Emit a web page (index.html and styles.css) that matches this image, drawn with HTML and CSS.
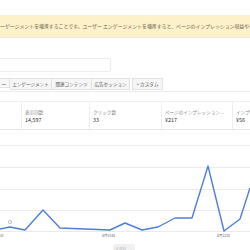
FILE: index.html
```html
<!DOCTYPE html>
<html lang="ja">
<head>
    <meta charset="UTF-8">
    <title>AdSense レポート</title>
    <link rel="stylesheet" href="styles.css">
</head>
<body>
    <div class="banner">ーゲージメントを増進することです。ユーザー エンゲージメントを増進すると、ページのインプレッション収益や平均</div>

    <div class="search"></div>

    <div class="tabs">
        <span class="tab first">ー</span>
        <span class="tab wide">エンゲージメント</span>
        <span class="tab mid">関連コンテンツ</span>
        <span class="tab mid2">広告セッション</span>
        <span class="tab custom">+ カスタム</span>
    </div>

    <div class="metrics">
        <div class="metric blank"></div>
        <div class="metric">
            <div class="label">表示回数</div>
            <div class="value">14,597</div>
        </div>
        <div class="metric">
            <div class="label">クリック数</div>
            <div class="value">33</div>
        </div>
        <div class="metric">
            <div class="label">ページのインプレッション...</div>
            <div class="value">¥217</div>
        </div>
        <div class="metric">
            <div class="label">インプ</div>
            <div class="value">¥56</div>
        </div>
    </div>

    <div class="chart">
        <svg width="250" height="123" viewBox="0 127 250 123">
            <g class="grid">
                <line x1="0" y1="142.5" x2="250" y2="142.5"/>
                <line x1="0" y1="164.5" x2="250" y2="164.5"/>
                <line x1="0" y1="186.5" x2="250" y2="186.5"/>
                <line x1="0" y1="207.5" x2="250" y2="207.5"/>
                <line x1="0" y1="228.5" x2="250" y2="228.5"/>
            </g>
            <polyline class="series" points="0,226 10,224 25,227 43,207 60,225 110,227 125,220 142,227 158,224 175,215 192,215 208,163 224,228 240,216 250,185"/>
            <circle class="note" cx="10" cy="219" r="1.6"/>
            <text class="axis" x="0" y="234">日</text>
            <text class="axis" x="102" y="234">8月15日</text>
            <text class="axis" x="217" y="234">8月22日</text>
            <rect class="credit" x="113" y="241" width="22" height="9" rx="2"/>
            <text class="credit-text" x="116" y="247">© 2018</text>
        </svg>
    </div>
</body>
</html>
```

FILE: styles.css
```css
body {
    margin: 0;
    width: 250px;
    height: 250px;
    overflow: hidden;
    background: #fff;
    font-family: "Noto Sans CJK JP", "Noto Sans", sans-serif;
    color: #333;
}
.banner {
    margin-top: 15px;
    height: 22px;
    line-height: 22px;
    background: #fcf1c9;
    box-shadow: 0 1px 1px rgba(0,0,0,0.08);
    color: #6d6450;
    font-size: 4.9px;
    white-space: nowrap;
    overflow: hidden;
}
.search {
    margin-top: 21px;
    margin-left: -1px;
    width: 110px;
    height: 12px;
    border: 1px solid #ececec;
    border-radius: 1px;
}
.tabs {
    display: flex;
    margin-top: 6px;
    padding-bottom: 1px;
    border-bottom: 1px solid #ececec;
    font-size: 4.6px;
    color: #555;
}
.tab {
    flex: none;
    height: 10px;
    line-height: 10px;
    background: #f6f6f6;
    border: 1px solid #e2e2e2;
    border-left: none;
    text-align: center;
    white-space: nowrap;
    overflow: hidden;
}
.tab.first {
    width: 10px;
    text-align: right;
    padding-right: 3px;
    box-sizing: border-box;
}
.tab.wide {
    width: 41px;
}
.tab.mid {
    width: 39px;
}
.tab.mid2 {
    width: 37px;
}
.custom {
    width: 29px;
    margin-left: 2px;
    border-left: 1px solid #e2e2e2;
}
.metrics {
    display: grid;
    grid-template-columns: 21px 68px 72px 71px 1fr;
    margin-top: 9px;
    height: 27px;
    border-top: 1px solid #f0f0f0;
    border-bottom: 1px solid #e4e4e4;
}
.metric {
    padding: 7px 0 0 3px;
    border-left: 1px solid #eeeeee;
    white-space: nowrap;
    overflow: hidden;
}
.metric.blank {
    border-left: none;
}
.label {
    font-size: 4.6px;
    line-height: 6px;
    color: #888;
}
.value {
    margin-top: 2px;
    font-size: 5.4px;
    line-height: 7px;
    color: #333;
}
.chart {
    height: 123px;
}
.chart svg {
    display: block;
}
.grid line {
    stroke: #ebebeb;
    stroke-width: 1;
}
.series {
    fill: none;
    stroke: #4d7fd6;
    stroke-width: 1.4;
    stroke-linejoin: round;
}
.note {
    fill: #fff;
    stroke: #999;
    stroke-width: 0.6;
}
.axis {
    font-size: 3.6px;
    fill: #666;
}
.credit {
    fill: #f0f0f0;
}
.credit-text {
    font-size: 3px;
    fill: #aaa;
}
```
